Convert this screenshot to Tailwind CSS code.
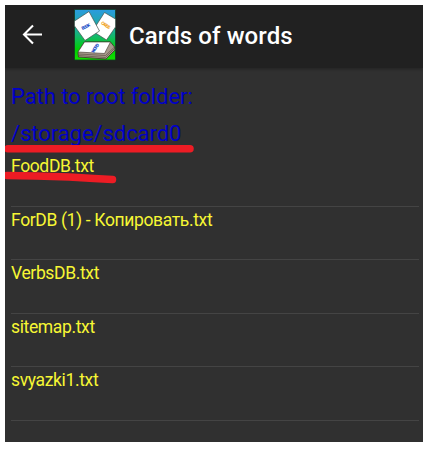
<!DOCTYPE html>
<html lang="en">
<head>
<meta charset="utf-8">
<title>Cards of words</title>
<script src="https://cdn.jsdelivr.net/npm/@tailwindcss/browser@4"></script>
</head>
<body class="bg-white font-[Roboto,sans-serif]">
<main class="relative ml-[5px] mt-[5px] flex h-[437px] w-[418px] flex-col overflow-hidden bg-[#303030]">
  <header class="flex h-[63px] shrink-0 items-start bg-[#212121] shadow-[0_1px_3px_rgba(0,0,0,0.3)]">
    <svg class="ml-[17px] mt-[19px] h-[21px] w-[21px] shrink-0" viewBox="0 0 21 21" fill="none" stroke="#fff" stroke-width="2.1"><path d="M20 10.500H2.500M11 1.500L2 10.500l9 9"/></svg>
    <svg class="ml-[31px] mt-1 h-[52px] w-[42px] shrink-0" viewBox="0 0 42 52">
      <defs><linearGradient id="sky" x2="0" y2="1"><stop stop-color="#2b9be0"/><stop offset=".45" stop-color="#18b28a"/><stop offset=".8" stop-color="#00d000"/><stop offset="1" stop-color="#12e000"/></linearGradient></defs>
      <path fill="url(#sky)" stroke="#123c22" stroke-width=".8" d="M.5.5h41v50.500H.5z"/>
      <path fill="#fff" stroke="#44504c" stroke-width=".7" d="M30.500 3.500L41.500 10v8L32.500 31 21.500 24l-1-5z"/>
      <path fill="#fff" stroke="#44504c" stroke-width=".7" d="M.5 12L15 2.500 25.500 22 11 31.500.5 17z"/>
      <path fill="#a79a8c" stroke="#3d3328" stroke-width=".8" d="M10.500 33L4 43.500l.5 4.500 27.500 2 9-9-.5-3-4-5z"/>
      <path fill="none" stroke="#5e5145" stroke-width=".7" d="M4.500 46.500l27 2 9.500-9.500M4.500 45l27 1.500 9.500-9"/>
      <path fill="#fff" stroke="#3d3328" stroke-width=".6" d="M10.500 33L4 43l26.500 1.500L36.500 33z"/>
      <g font-family="Roboto, sans-serif" font-weight="900" font-size="4.500" text-anchor="middle">
        <text fill="#2450c8" textLength="9" transform="translate(12.500 19) rotate(-27)">BOOK</text>
        <text fill="#f0a52a" textLength="10" transform="translate(31 17.500) rotate(32)">CARDS</text>
        <text fill="#2450c8" textLength="10" transform="translate(22.500 40) rotate(-56)">WORD</text>
      </g>
    </svg>
    <h1 class="ml-[13px] mt-[17px] whitespace-nowrap text-[24px] font-medium leading-[28px] tracking-[0.1px] text-white">Cards of words</h1>
  </header>
  <section class="pl-1.5 pt-[10px] text-[22px] leading-[37px] tracking-[-0.06px] text-[#0000c8]">
    <p>Path to root folder:</p>
    <p>/storage/sdcard0</p>
  </section>
  <ul class="ml-1.5 mr-1 mt-px text-[17.5px] leading-[24px] tracking-[-0.36px] text-[#f7f734]">
    <li class="h-[53.500px] border-b border-[#444] pt-px">FoodDB.txt</li>
    <li class="h-[53.500px] border-b border-[#444] pt-px">ForDB (1) - Копировать.txt</li>
    <li class="h-[53.500px] border-b border-[#444] pt-px">VerbsDB.txt</li>
    <li class="h-[53.500px] border-b border-[#444] pt-px">sitemap.txt</li>
    <li class="h-[53.500px] border-b border-[#444] pt-px">svyazki1.txt</li>
  </ul>
  <svg class="absolute left-0 top-[133px] h-[50px] w-[200px]" viewBox="0 0 200 50" fill="none" stroke="#ed1c24" stroke-width="7.500" stroke-linecap="round" stroke-linejoin="round"><path d="M3 10.800H185"/><path d="M2 37.500l29 .5 33 1 25 1.500 18.500 1"/></svg>
</main>
</body>
</html>
